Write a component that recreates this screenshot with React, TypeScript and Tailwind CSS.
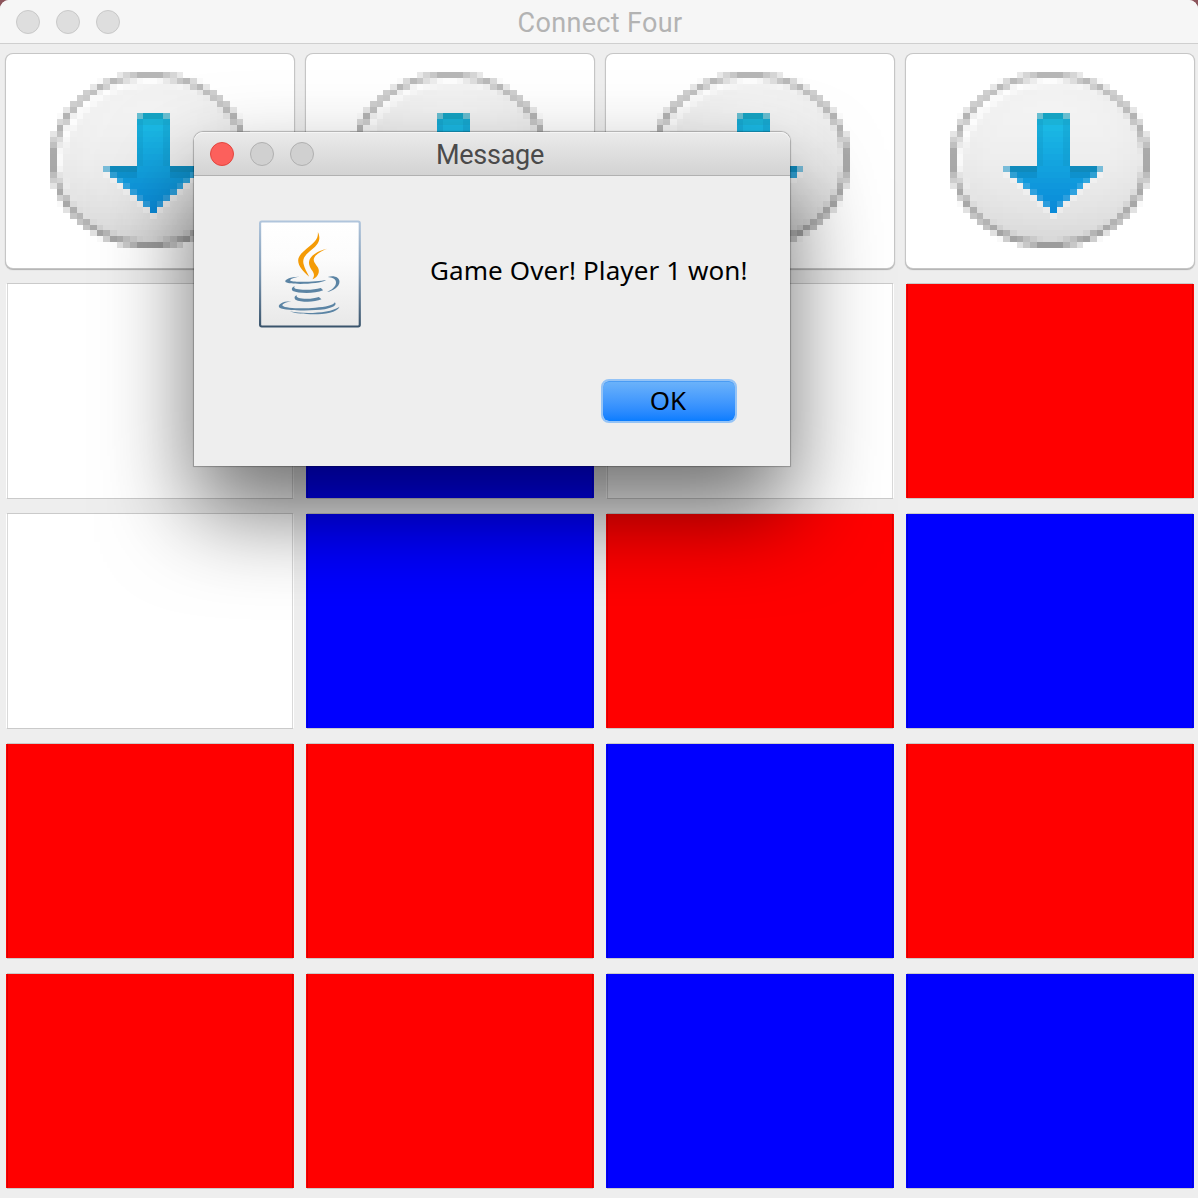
import React from "react";

const N = 30;

type Pixel = { x: number; y: number; c: string };

function over(base: number[], top: number[], a: number) {
  return base.map((v, i) => v + (top[i] - v) * a);
}

function clamp(v: number) {
  return Math.max(0, Math.min(1, v));
}

// Colour of one point of the round badge, in a 30 x 30 space.
function badgeAt(x: number, y: number) {
  const dx = x - 15;
  const dy = y - 15;
  const d = Math.hypot(dx, dy);
  const t = y / N;
  const white = [255, 255, 255];
  if (d > 15) return white;
  const ring = 182 - 26 * t;
  if (d > 14) return [ring, ring, ring];
  const tone = 244 - 26 * Math.pow(clamp((dy + 15) / 30), 2) - Math.max(0, d - 9) * 0.8;
  const body = [tone, tone, tone];
  const glow = clamp((14.9 - Math.hypot(dx - 1.1, dy - 1.2)) / 1.1);
  return over(white, body, glow);
}

function inArrow(col: number, row: number) {
  if (row >= 7 && row < 16) return col >= 13 && col <= 17;
  if (row >= 16 && row <= 23) return Math.abs(col - 15) <= 23 - row;
  return false;
}

function arrowPixel(col: number, row: number) {
  const t = (row - 7) / 16;
  let c = [28 - 18 * t, 190 - 52 * t, 230 - 14 * t];
  const off = Math.abs(col - 15);
  if (row === 7) c = [22, 163, 194];
  if (row === 8) c = [26, 178, 215];
  if (row < 16 && off === 2) c = over(c, [15, 145, 190], 0.3);
  if (row === 16 && off > 2) c = [15, 138, 188];
  if (row === 17 && off > 2) c = [14, 145, 205];
  if (row === 7 && off === 2) c = [104, 190, 208];
  if (row >= 16 && row < 23 && off === 23 - row) c = over(c, [225, 238, 245], row === 16 ? 0.5 : 0.16);
  return c;
}

const PIXELS: Pixel[] = [];
for (let row = 0; row < N; row++) {
  for (let col = 0; col < N; col++) {
    let sum = [0, 0, 0];
    if (inArrow(col, row)) {
      sum = arrowPixel(col, row);
    } else {
      for (let i = 0; i < 16; i++) {
        const p = badgeAt(col + ((i % 4) + 0.5) / 4, row + (Math.floor(i / 4) + 0.5) / 4);
        sum = sum.map((v, k) => v + p[k] / 16);
      }
      if (inArrow(col, row - 1) || (row > 16 && (inArrow(col - 1, row) || inArrow(col + 1, row)))) {
        sum = over(sum, [255, 255, 255], 0.3);
      }
    }
    const [r, g, b] = sum.map(Math.round);
    PIXELS.push({ x: col, y: row, c: `rgb(${r},${g},${b})` });
  }
}

function DownIcon() {
  return (
    <svg width="200" height="176" viewBox="0 0 30 30" preserveAspectRatio="none" shapeRendering="crispEdges">
      {PIXELS.map((p) => (
        <rect key={`${p.x}-${p.y}`} x={p.x} y={p.y} width="1" height="1" fill={p.c} />
      ))}
    </svg>
  );
}

function JavaIcon() {
  return (
    <svg width="103" height="108" viewBox="42.500 29 309 324" className="block">
      <defs>
        <linearGradient id="frame" x1="0" y1="0" x2="0" y2="1">
          <stop offset="0" stopColor="#b0c5dc" />
          <stop offset="0.5" stopColor="#7f9ab4" />
          <stop offset="1" stopColor="#3a546c" />
        </linearGradient>
        <linearGradient id="paper" x1="0" y1="0" x2="0" y2="1">
          <stop offset="0" stopColor="#ffffff" />
          <stop offset="0.35" stopColor="#fcfcfc" />
          <stop offset="1" stopColor="#e8e8e8" />
        </linearGradient>
      </defs>
      <rect x="45.800" width="299" y="33.500" height="315" rx="5" fill="url(#paper)" stroke="url(#frame)" strokeWidth="6.500" />
      <g fill="#f49b06">
        <path d="M219 65C230 88 220 101 202 117C183 133 172 143 176 160C179 174 186 184 193 199C175 184 160 168 160 150C161 133 177 123 194 108C211 94 221 84 219 65Z" />
        <path d="M247 115C232 120 211 132 207 145C204 159 222 167 222 181C222 195 213 202 203 207C211 194 207 187 200 178C192 166 188 153 200 139C211 126 232 118 247 115Z" />
      </g>
      <g fill="#5b84a4">
        <path d="M164 199C148 201 132 207 137 211C150 217 220 214 244 209C225 222 139 224 123 216C114 207 143 198 164 199Z" />
        <path d="M150 228C144 235 154 237 174 238C196 239 212 237 228 233L235 240C208 251 160 249 144 242C138 236 142 230 150 228Z" />
        <path d="M156 255C153 261 160 264 178 265C196 266 208 264 222 260L230 267C208 277 168 276 152 268C147 263 149 257 156 255Z" />
        <path d="M249 200C267 194 284 201 284 214C284 229 266 241 247 245C265 237 276 225 273 213C271 204 260 201 249 200Z" />
        <path d="M140 273C125 275 111 281 113 286C121 294 174 295 211 292C242 290 267 285 270 276C278 284 264 292 240 297C201 302 123 302 104 292C95 283 117 271 140 273Z" />
        <path d="M135 303C176 311 255 310 284 289C278 306 239 312 207 312C178 312 151 310 135 303Z" />
      </g>
    </svg>
  );
}

const FILLS: Record<string, string> = {
  W: "bg-white",
  R: "bg-[#ff0000]",
  B: "bg-[#0000ff]",
};

const BOARD = ["WBWR", "WBRB", "RRBR", "RRBB"];

function Cell({ kind }: { kind: string }) {
  return (
    <div className={`relative h-[214px] w-[288px] ${FILLS[kind]}`}>
      <div className="absolute -top-px -bottom-px left-px right-px border border-black/15" />
    </div>
  );
}

export default function App() {
  return (
    <div className="h-[1198px] w-[1198px] overflow-hidden bg-[#8d555c]">
      <div className="relative flex h-full flex-col overflow-hidden rounded-t-[9px] bg-[#eeeeee]">
        <header className="grid h-[44px] shrink-0 grid-cols-[1fr_auto_1fr] items-center border-b border-[#cfcfcf] bg-[#f6f6f6]">
          <div className="flex gap-4 pl-4">
            {[0, 1, 2].map((i) => (
              <span key={i} className="size-6 rounded-full border border-[#c9c9c9] bg-[#dedede]" />
            ))}
          </div>
          <h1 className="pl-[2px] pt-[2px] font-[Roboto,sans-serif] text-[27px] leading-8 tracking-[0.35px] text-[#b3b3b3]">Connect Four</h1>
        </header>

        <main className="grid grid-cols-[repeat(4,288px)] gap-x-3 gap-y-4 px-1.5 pt-2.5">
          {[0, 1, 2, 3].map((i) => (
            <button
              key={i}
              aria-label={`Drop in column ${i + 1}`}
              className="flex h-[214px] w-[288px] items-center justify-center rounded-[7px] bg-white pb-[2px] shadow-[0_0_0_1px_#c6c6c6,0_1px_1px_1px_#b0b0b0]"
            >
              <DownIcon />
            </button>
          ))}
          {BOARD.flatMap((row, r) => row.split("").map((kind, c) => <Cell key={`${r}-${c}`} kind={kind} />))}
        </main>

        <section
          role="dialog"
          className="absolute left-[194px] top-[132px] flex h-[334px] w-[596px] flex-col rounded-t-[9px] bg-[#eeeeee] shadow-[0_0_1px_1px_rgba(0,0,0,0.25),0_46px_90px_rgba(0,0,0,0.56)]"
        >
          <div className="grid h-[44px] shrink-0 grid-cols-[1fr_auto_1fr] items-center rounded-t-[9px] border-b border-[#b1b1b1] bg-linear-to-b from-[#ebebeb] to-[#d3d3d3] shadow-[inset_0_1px_0_#f5f5f5]">
            <div className="flex gap-4 pl-4">
              <span className="size-6 rounded-full border border-[#e2463f] bg-[#fc605c]" />
              <span className="size-6 rounded-full border border-[#b0b0b0] bg-[#d0d0d0]" />
              <span className="size-6 rounded-full border border-[#b0b0b0] bg-[#d0d0d0]" />
            </div>
            <h2 className="pr-[4px] pt-[2px] font-[Roboto,sans-serif] text-[27px] leading-8 tracking-[-0.28px] text-[#4a4a4a]">Message</h2>
          </div>
          <div className="flex flex-1 items-start pl-[65px] pt-[44px]">
            <JavaIcon />
            <p className="ml-[68px] mt-[32px] whitespace-nowrap font-['Noto_Sans',sans-serif] text-[26px] leading-9 tracking-[0.1px] text-black">
              Game Over! Player 1 won!
            </p>
          </div>
          <div className="flex justify-end pb-[43px] pr-[53px]">
            <button className="h-[44px] w-[136px] rounded-[8px] border-2 border-[#94c3f6] bg-linear-to-b from-[#6cb3fa] to-[#077dff] bg-clip-padding pb-[2px] pr-[2px] font-['Noto_Sans',sans-serif] text-[26px] leading-[38px] text-black shadow-[inset_0_1px_0_#4a9cf4]">
              OK
            </button>
          </div>
        </section>
      </div>
    </div>
  );
}
